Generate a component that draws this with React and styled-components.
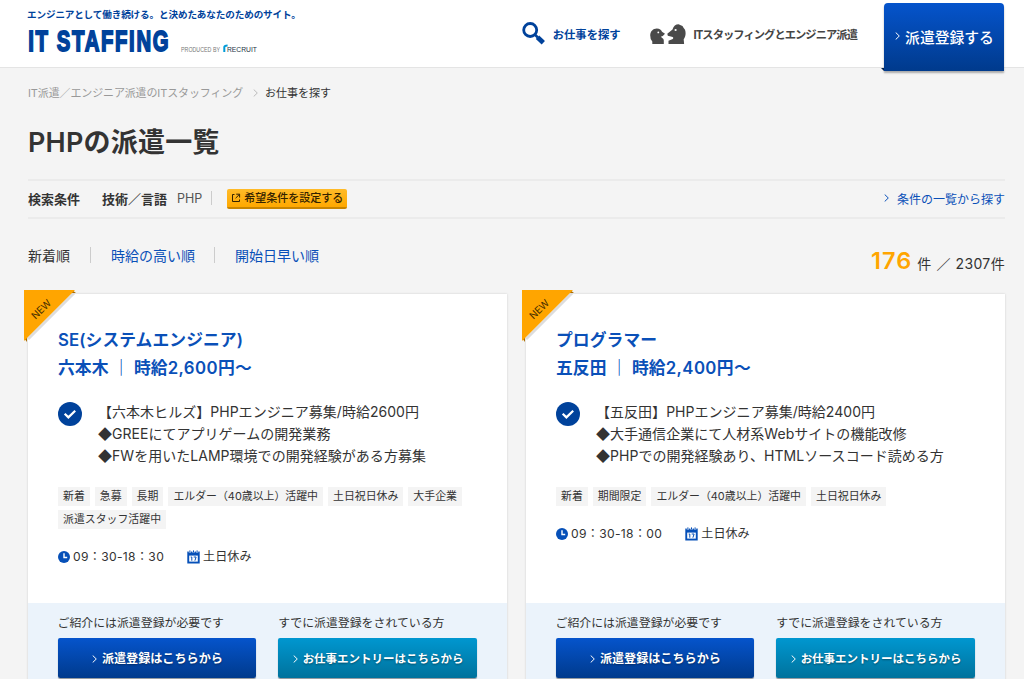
import React from 'react';
import styled, { createGlobalStyle } from 'styled-components';

const GlobalStyle = createGlobalStyle`
  *, *::before, *::after { box-sizing: border-box; }
  body {
    margin: 0;
    height: 679px;
    overflow: hidden;
    background: #f4f4f4;
    color: #333;
    font-family: Inter, "Noto Sans CJK JP", sans-serif;
    font-size: 14px;
  }
  h1, h2, p, ul { margin: 0; padding: 0; }
  a { color: #0a50b8; text-decoration: none; }
`;

const Page = styled.div`
  height: 679px;
  overflow: hidden;
`;

const Header = styled.header`
  display: flex;
  justify-content: space-between;
  height: 68px;
  padding: 0 20px 0 27px;
  background: #fff;
  border-bottom: 1px solid #e4e4e4;
`;

const Brand = styled.div`
  padding-top: 7px;
`;

const Tagline = styled.p`
  height: 15px;
  color: #00429b;
  font-size: 9.6px;
  font-weight: 700;
  line-height: 15px;
  letter-spacing: -0.13px;
  white-space: nowrap;
`;

const LogoRow = styled.div`
  display: flex;
  margin-top: 5px;
  svg { display: block; overflow: visible; }
`;

const Nav = styled.nav`
  display: flex;
  align-items: flex-start;
`;

const NavLink = styled.a`
  display: flex;
  align-items: center;
  height: 67px;
  gap: 8px;
  margin-right: ${(p) => p.$after}px;
  color: ${(p) => p.$color};
  font-size: 11.3px;
  font-weight: 700;
  letter-spacing: ${(p) => p.$track || 0}px;
  white-space: nowrap;
  svg { display: block; flex: none; }
`;

const RegisterButton = styled.a`
  position: relative;
  display: flex;
  align-items: center;
  justify-content: center;
  gap: 5px;
  width: 120px;
  height: 68px;
  margin-top: 3px;
  padding: 0 0 2px 1px;
  border-radius: 4px 4px 0 0;
  background: linear-gradient(#0554cc, #003a8c);
  box-shadow: 0 2px 2px rgba(0, 0, 0, 0.3);
  color: #fff;
  font-size: 14.8px;
  font-weight: 500;
  white-space: nowrap;
  &::before {
    content: '';
    position: absolute;
    left: -3px;
    bottom: 0;
    border-top: 3px solid #06224c;
    border-left: 3px solid transparent;
  }
`;

const Main = styled.main`
  width: 977px;
  margin-left: 28px;
`;

const Breadcrumb = styled.div`
  display: flex;
  align-items: center;
  height: 20px;
  margin-top: 14px;
  padding-top: 1px;
  font-size: 11px;
  line-height: 20px;
  white-space: nowrap;
  svg { margin: 0 7px 0 10px; }
`;

const Crumb = styled.span`
  color: ${(p) => (p.$current ? '#333' : '#999')};
  letter-spacing: ${(p) => (p.$current ? 0 : -0.13)}px;
`;

const Title = styled.h1`
  height: 40px;
  margin-top: 21px;
  font-size: 27px;
  font-weight: 600;
  line-height: 40px;
  letter-spacing: 0.2px;
`;

const Conditions = styled.section`
  display: flex;
  align-items: center;
  height: 40px;
  margin-top: 16px;
  padding-bottom: 2px;
  border-top: 2px solid #ebebeb;
  border-bottom: 2px solid #ebebeb;
  font-size: 13px;
  white-space: nowrap;
`;

const ConditionLabel = styled.b`
  margin-right: ${(p) => p.$after}px;
`;

const ConditionValue = styled.span`
  color: #555;
  font-size: 12.5px;
`;

const Divider = styled.i`
  width: 1px;
  height: ${(p) => p.$h}px;
  margin: 0 ${(p) => p.$right}px 0 ${(p) => p.$left}px;
  background: #ccc;
`;

const SetButton = styled.a`
  display: flex;
  align-items: center;
  justify-content: center;
  gap: 3px;
  width: 120px;
  height: 20px;
  margin-top: 2px;
  border-radius: 2px;
  background: linear-gradient(#ffbb29, #ffa800);
  border-bottom: 2px solid #c98500;
  color: #332200;
  font-size: 11px;
  font-weight: 500;
  line-height: 18px;
`;

const ListLink = styled.a`
  display: flex;
  align-items: center;
  gap: 8px;
  margin-left: auto;
  font-size: 12px;
`;

const SortRow = styled.section`
  display: flex;
  height: 74px;
  padding-top: 25px;
  white-space: nowrap;
`;

const SortList = styled.div`
  display: flex;
  align-items: center;
  height: 22px;
`;

const Count = styled.p`
  height: 36px;
  margin: 1px 0 0 auto;
  line-height: 32px;
  font-size: 14px;
  letter-spacing: 0.35px;
  word-spacing: 0.5px;
  b {
    color: #ffa500;
    font-size: 23.5px;
    font-weight: 600;
    letter-spacing: 1.1px;
  }
`;

const Cards = styled.div`
  display: grid;
  grid-template-columns: 479px 479px;
  column-gap: 19px;
  margin-top: 1px;
`;

const Card = styled.article`
  position: relative;
  display: flex;
  flex-direction: column;
  height: 420px;
  background: #fff;
  box-shadow: 0 0 2px rgba(0, 0, 0, 0.16);
`;

const Ribbon = styled.div`
  position: absolute;
  left: -4px;
  top: -4px;
  svg { display: block; }
`;

const CardBody = styled.div`
  height: 309px;
  padding: 32px 30px 0;
`;

const JobTitle = styled.h2`
  color: #0a50b8;
  font-size: 16.8px;
  font-weight: 600;
  line-height: 28px;
  letter-spacing: 0.07px;
  white-space: nowrap;
`;

const Pay = styled.span`
  letter-spacing: 0.4px;
`;

const Summary = styled.div`
  display: flex;
  gap: 16px;
  margin-top: 19px;
  svg { flex: none; margin-top: 1px; }
`;

const SummaryText = styled.div`
  font-size: 14px;
  letter-spacing: 0.03px;
  white-space: nowrap;
`;

const SummaryLine = styled.p`
  height: 22px;
  line-height: 22px;
`;

const Diamond = styled.span`
  display: inline-block;
  height: 20px;
  line-height: 20px;
  vertical-align: top;
  font-family: "Noto Sans CJK JP", sans-serif;
`;

const Tags = styled.ul`
  display: flex;
  flex-wrap: wrap;
  gap: 4px 5px;
  margin: 20px 0 0;
  list-style: none;
`;

const Tag = styled.li`
  height: 19px;
  padding: 0 5px;
  background: #f4f4f4;
  font-size: 10.9px;
  line-height: 19px;
  white-space: nowrap;
`;

const Schedule = styled.div`
  display: flex;
  align-items: center;
  height: 20px;
  margin-top: 18px;
  font-size: 12.1px;
  line-height: 18px;
  white-space: nowrap;
`;

const ScheduleItem = styled.span`
  display: flex;
  align-items: center;
  gap: 3px;
  margin-right: 23px;
  letter-spacing: ${(p) => p.$track || 0}px;
`;

const CardFooter = styled.footer`
  display: flex;
  flex: 1;
  gap: 22px;
  padding: 10px 30px 0 29.5px;
  background: #ebf3fb;
`;

const Entry = styled.div`
  width: 199px;
  font-size: 11.9px;
  line-height: 20px;
  white-space: nowrap;
`;

const EntryButton = styled.a`
  display: flex;
  align-items: center;
  justify-content: center;
  gap: 5px;
  height: 40px;
  margin-top: 5px;
  padding: 1px 0 0 1px;
  border-radius: 2px;
  background: ${(p) => (p.$teal ? 'linear-gradient(#0097d0, #00729c)' : 'linear-gradient(#0554cc, #003a8c)')};
  box-shadow: 0 1px 1px rgba(0, 0, 0, 0.4);
  color: #fff;
  font-size: ${(p) => (p.$teal ? 11.5 : 12.1)}px;
  font-weight: 700;
  text-shadow: 0 1px 2px rgba(0, 0, 0, 0.4);
`;

const Chevron = ({ color = '#fff', size = 8 }) => (
  <svg width={size / 2 + 1} height={size} viewBox="0 0 5 8" fill="none" stroke={color}>
    <path d="M.7.5 4.3 4 .7 7.5" />
  </svg>
);

const narrow = "'Liberation Sans Narrow', 'Liberation Sans', sans-serif";

const LogoMark = () => (
  <svg width="232" height="26" viewBox="0 0 232 26" role="img" aria-label="IT STAFFING">
    <text
      x="1.2" y="24" fill="#00429b" stroke="#00429b" strokeWidth="1.8"
      fontFamily={narrow} fontSize="29.5" fontWeight="700" letterSpacing="2.4"
      textLength="142" lengthAdjust="spacingAndGlyphs"
    >
      IT STAFFING
    </text>
    <text x="154" y="24.8" fill="#777" fontSize="6.6" fontFamily={narrow} textLength="39" lengthAdjust="spacingAndGlyphs">PRODUCED BY</text>
    <path d="M197.3 25v-4.8q0-1.7 3.3-1.7" fill="none" stroke="#009bd8" strokeWidth="2" />
    <text x="200" y="24.8" fill="#234" fontSize="7.4" fontFamily={narrow} textLength="30" lengthAdjust="spacingAndGlyphs">RECRUIT</text>
  </svg>
);

const SearchIcon = () => (
  <svg width="23" height="23" viewBox="0 0 23 23" fill="none" stroke="#00429b">
    <circle cx="8.2" cy="8" r="6.5" strokeWidth="2.8" />
    <path d="m12.8 12.5 3 3" strokeWidth="2.5" />
    <path d="m15.5 15.2 5.8 5.6" strokeWidth="4.8" />
  </svg>
);

const HeadsIcon = () => (
  <svg width="36" height="20" viewBox="0 0 36 20" fill="#4a4a4a">
    <path d="M2.3 20V17.4Q0 14.8.2 11.3C.4 7.2 3.1 4.6 6.8 4.5c2.8 0 4.6 1.5 5.2 3.2l3 2-2.2 2.3-2 .7 2.6 2.3.4 1.5v3.5z" />
    <path d="M18.5 20v-3.3l4.3-1.6q1.6-2.4-2-2.6l-3-.8-.5-2 5.2-4.2C23.5 1.8 25.7.2 28.6.2l1.5.8 2.4 1 1 1.7 1.5 2c1.2 3.4.5 6.8-1.3 9.6l.4 4.7z" />
    <circle cx="8.3" cy="8.4" r=".9" fill="#fff" />
    <circle cx="25.6" cy="6" r="1.1" fill="#fff" />
  </svg>
);

const ExternalIcon = () => (
  <svg width="10" height="10" viewBox="0 0 10 10" fill="none" stroke="#332200">
    <path d="M3.5 1.5h-2v7h7v-2M5.2 1.2h3.4v3.3M8.5 1.3 4.6 5.2" />
  </svg>
);

const CheckIcon = () => (
  <svg width="24" height="24" viewBox="0 0 24 24">
    <circle cx="12" cy="12" r="12" fill="#00429b" />
    <path d="m6.7 11.7 3.7 3.7 6.8-6.7" fill="none" stroke="#fff" strokeWidth="2.2" />
  </svg>
);

const ClockIcon = () => (
  <svg width="12" height="12" viewBox="0 0 12 12">
    <circle cx="6" cy="6" r="6" fill="#0650b8" />
    <path d="M6 2.2v4.3h3.2" fill="none" stroke="#fff" strokeWidth="1.4" />
  </svg>
);

const CalendarIcon = () => (
  <svg width="13" height="14" viewBox="0 0 13 14">
    <path d="M.3 1.5h12.4v12H.3z" fill="#0650b8" />
    <path d="M2.2 5.6h8.6v6H2.2z" fill="#fff" />
    <path d="M2.9 0v2.6M6.5 0v2.6M10.1 0v2.6" stroke="#fff" strokeWidth="2.4" />
    <path d="M2.9 .4v2M6.5 .4v2M10.1 .4v2" stroke="#0650b8" />
    <path d="M3.7 7h1.1v3.7M6.7 7h2.4L7.9 10.7" fill="none" stroke="#0650b8" />
  </svg>
);

const NewRibbon = () => (
  <Ribbon>
    <svg width="56" height="56" viewBox="0 0 56 56">
      <path d="M4 49 50 3" stroke="#ddd" strokeWidth="3" />
      <path d="M48 0 52 3H46zM0 48l3 4V46z" fill="#a86b00" />
      <path d="M0 0h51L0 51z" fill="#ffa500" />
      <text transform="translate(11.5 29.8) rotate(-45)" fontFamily="Inter, sans-serif" fontSize="9.8" fill="#3d2900">NEW</text>
    </svg>
  </Ribbon>
);

const jobs = [
  {
    title: 'SE(システムエンジニア)',
    place: '六本木 ｜ 時給',
    pay: '2,600円〜',
    lead: '【六本木ヒルズ】PHPエンジニア募集/時給2600円',
    points: ['GREEにてアプリゲームの開発業務', 'FWを用いたLAMP環境での開発経験がある方募集'],
    tags: ['新着', '急募', '長期', 'エルダー（40歳以上）活躍中', '土日祝日休み', '大手企業', '派遣スタッフ活躍中'],
    hours: '09：30-18：30',
  },
  {
    title: 'プログラマー',
    place: '五反田 ｜ 時給',
    pay: '2,400円〜',
    lead: '【五反田】PHPエンジニア募集/時給2400円',
    points: ['大手通信企業にて人材系Webサイトの機能改修', 'PHPでの開発経験あり、HTMLソースコード読める方'],
    tags: ['新着', '期間限定', 'エルダー（40歳以上）活躍中', '土日祝日休み'],
    hours: '09：30-18：00',
  },
];

const JobCard = ({ job }) => (
  <Card>
    <NewRibbon />
    <CardBody>
      <JobTitle>{job.title}<br />{job.place}<Pay>{job.pay}</Pay></JobTitle>
      <Summary>
        <CheckIcon />
        <SummaryText>
          <SummaryLine>{job.lead}</SummaryLine>
          {job.points.map((point) => (
            <SummaryLine key={point}><Diamond>◆</Diamond>{point}</SummaryLine>
          ))}
        </SummaryText>
      </Summary>
      <Tags>{job.tags.map((tag) => <Tag key={tag}>{tag}</Tag>)}</Tags>
      <Schedule>
        <ScheduleItem $track={0.33}><ClockIcon />{job.hours}</ScheduleItem>
        <ScheduleItem><CalendarIcon />土日休み</ScheduleItem>
      </Schedule>
    </CardBody>
    <CardFooter>
      <Entry>ご紹介には派遣登録が必要です<EntryButton><Chevron />派遣登録はこちらから</EntryButton></Entry>
      <Entry>すでに派遣登録をされている方<EntryButton $teal><Chevron />お仕事エントリーはこちらから</EntryButton></Entry>
    </CardFooter>
  </Card>
);

export default function App() {
  return (
    <Page>
      <GlobalStyle />
      <Header>
        <Brand>
          <Tagline>エンジニアとして働き続ける。と決めたあなたのためのサイト。</Tagline>
          <LogoRow><LogoMark /></LogoRow>
        </Brand>
        <Nav>
          <NavLink $color="#00429b" $after={29}><SearchIcon />お仕事を探す</NavLink>
          <NavLink $color="#444" $after={27} $track={-0.97}><HeadsIcon />ITスタッフィングとエンジニア派遣</NavLink>
          <RegisterButton><Chevron />派遣登録する</RegisterButton>
        </Nav>
      </Header>
      <Main>
        <Breadcrumb>
          <Crumb>IT派遣／エンジニア派遣のITスタッフィング</Crumb>
          <Chevron color="#bbb" />
          <Crumb $current>お仕事を探す</Crumb>
        </Breadcrumb>
        <Title>PHPの派遣一覧</Title>
        <Conditions>
          <ConditionLabel $after={22}>検索条件</ConditionLabel>
          <ConditionLabel $after={10}>技術／言語</ConditionLabel>
          <ConditionValue>PHP</ConditionValue>
          <Divider $h={14} $left={9} $right={15} />
          <SetButton><ExternalIcon />希望条件を設定する</SetButton>
          <ListLink><Chevron color="#0a50b8" />条件の一覧から探す</ListLink>
        </Conditions>
        <SortRow>
          <SortList>
            <span>新着順</span>
            <Divider $h={16} $left={20} $right={20} />
            <a>時給の高い順</a>
            <Divider $h={16} $left={19} $right={20} />
            <a>開始日早い順</a>
          </SortList>
          <Count><b>176</b> 件 ／ 2307件</Count>
        </SortRow>
        <Cards>{jobs.map((job) => <JobCard key={job.title} job={job} />)}</Cards>
      </Main>
    </Page>
  );
}
